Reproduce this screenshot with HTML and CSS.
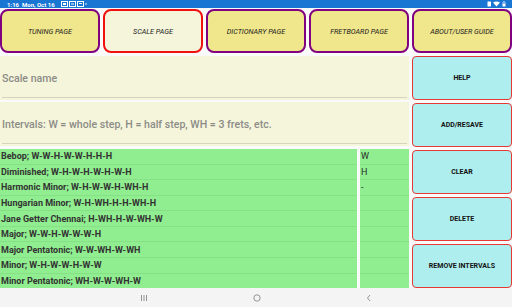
FILE: index.html
```html
<!DOCTYPE html>
<html lang="en">
<head>
    <meta charset="UTF-8">
    <meta name="viewport" content="width=device-width, initial-scale=1.0">
    <title>Scale Page</title>
    <link rel="stylesheet" href="styles.css">
</head>
<body>
    <div class="status-bar">
        <span class="status-time">1:16&nbsp;&nbsp;Mon, Oct 16</span>
        <span class="status-icons">
            <svg width="26" height="6" viewBox="0 0 26 6">
                <rect x="0.5" y="0.5" width="6" height="5" fill="none" stroke="#fff" stroke-width="1"/>
                <rect x="2" y="2" width="3" height="2" fill="#fff"/>
                <rect x="8.5" y="0.5" width="6" height="5" fill="none" stroke="#fff" stroke-width="1"/>
                <rect x="10" y="2.5" width="3" height="1" fill="#fff"/>
                <rect x="16.5" y="0.5" width="6" height="5" fill="none" stroke="#fff" stroke-width="1"/>
                <rect x="18" y="2" width="3" height="1" fill="#fff"/>
                <circle cx="25" cy="3" r="0.8" fill="#fff"/>
            </svg>
        </span>
        <span class="status-right">
            <svg width="20" height="6" viewBox="0 0 20 6">
                <rect x="0.5" y="0.5" width="3.5" height="5" rx="0.5" fill="#fff"/>
                <path d="M6 1.5 Q9.5 -0.5 13 1.5 L9.5 5.5 Z" fill="#fff"/>
                <rect x="15.5" y="2.5" width="3" height="3" fill="#fff"/>
                <path d="M16 2.5 V1.5 A1 1 0 0 1 18 1.5 V2.5" fill="none" stroke="#fff" stroke-width="0.7"/>
            </svg>
        </span>
    </div>

    <div class="tab-row">
        <button class="tab-btn">TUNING PAGE</button>
        <button class="tab-btn tab-current">SCALE PAGE</button>
        <button class="tab-btn">DICTIONARY PAGE</button>
        <button class="tab-btn">FRETBOARD PAGE</button>
        <button class="tab-btn">ABOUT/USER GUIDE</button>
    </div>

    <div class="main-container">
        <div class="left-column">
            <div class="text-field">
                <input placeholder="Scale name">
            </div>
            <div class="text-field">
                <input placeholder="Intervals: W = whole step, H = half step, WH = 3 frets, etc.">
            </div>
            <div class="list-area">
                <ul class="scale-list">
                    <li>Bebop; W-W-H-W-W-H-H-H</li>
                    <li>Diminished; W-H-W-H-W-H-W-H</li>
                    <li>Harmonic Minor; W-H-W-W-H-WH-H</li>
                    <li>Hungarian Minor; W-H-WH-H-H-WH-H</li>
                    <li>Jane Getter Chennai; H-WH-H-W-WH-W</li>
                    <li>Major; W-W-H-W-W-W-H</li>
                    <li>Major Pentatonic; W-W-WH-W-WH</li>
                    <li>Minor; W-H-W-W-H-W-W</li>
                    <li>Minor Pentatonic; WH-W-W-WH-W</li>
                </ul>
                <ul class="interval-list">
                    <li>W</li>
                    <li>H</li>
                    <li>-</li>
                    <li></li>
                    <li></li>
                    <li></li>
                    <li></li>
                    <li></li>
                    <li></li>
                </ul>
            </div>
        </div>
        <div class="right-column">
            <button class="action-btn">HELP</button>
            <button class="action-btn">ADD/RESAVE</button>
            <button class="action-btn">CLEAR</button>
            <button class="action-btn">DELETE</button>
            <button class="action-btn">REMOVE INTERVALS</button>
        </div>
    </div>

    <div class="nav-bar">
        <svg class="nav-icon" width="8" height="8" viewBox="0 0 8 8">
            <path d="M1.5 1 V7 M4 1 V7 M6.5 1 V7" stroke="#8a8a8a" stroke-width="0.9" fill="none"/>
        </svg>
        <svg class="nav-icon" width="8" height="8" viewBox="0 0 8 8">
            <circle cx="4" cy="4" r="3.2" stroke="#8a8a8a" stroke-width="0.9" fill="none"/>
        </svg>
        <svg class="nav-icon" width="8" height="8" viewBox="0 0 8 8">
            <path d="M5 1 L2.5 4 L5 7" stroke="#8a8a8a" stroke-width="0.9" fill="none"/>
        </svg>
    </div>
</body>
</html>
```

FILE: styles.css
```css
* {
    box-sizing: border-box;
}

body {
    margin: 0;
    width: 512px;
    height: 307px;
    overflow: hidden;
    background: #fafafa;
    font-family: Roboto, "Liberation Sans", sans-serif;
}

.status-bar {
    height: 8px;
    background: #1976d2;
    color: #fff;
    display: flex;
    align-items: center;
    padding: 0 5px 0 7px;
    font-size: 6px;
    font-weight: bold;
}

.status-icons {
    margin-left: 6px;
    display: flex;
}

.status-right {
    margin-left: auto;
    display: flex;
}

.tab-row {
    display: grid;
    grid-template-columns: repeat(5, 1fr);
    gap: 3px;
    padding: 1px 0 2px 0;
    height: 47px;
}

.tab-btn {
    background: #f0e68c;
    border: 2px solid #800080;
    border-radius: 8px;
    font-family: Roboto, "Liberation Sans", sans-serif;
    font-style: italic;
    font-size: 7.2px;
    color: #1a1a1a;
    padding: 0;
}

.tab-current {
    background: #f5f5dc;
    border-color: #f01010;
}

.main-container {
    display: flex;
    gap: 3px;
    padding-top: 1px;
    height: 233px;
}

.left-column {
    width: 409px;
    display: flex;
    flex-direction: column;
}

.text-field {
    height: 44px;
    background: #f5f5dc;
    padding: 0 2px;
    display: flex;
    margin-bottom: 2px;
}

.text-field + .text-field {
    margin-bottom: 3px;
}

.text-field input {
    width: 100%;
    height: 42px;
    border: none;
    border-bottom: 1.5px solid #d6d4bc;
    background: transparent;
    font-family: Roboto, "Liberation Sans", sans-serif;
    font-size: 10.6px;
    font-weight: 500;
    padding: 4px 0 0 0;
    outline: none;
}

.text-field input::placeholder {
    color: #8c8c86;
}

.list-area {
    flex: 1;
    display: flex;
    gap: 2px;
}

.scale-list,
.interval-list {
    list-style: none;
    margin: 0;
    padding: 0;
    background: #90ee90;
    display: flex;
    flex-direction: column;
}

.scale-list {
    width: 357px;
}

.interval-list {
    flex: 1;
    margin-left: 1px;
}

.scale-list li,
.interval-list li {
    flex: 1;
    border-bottom: 1px solid #86e086;
    font-size: 9px;
    color: #333;
    padding-left: 1px;
    display: flex;
    align-items: center;
}

.scale-list li {
    font-weight: bold;
}

.interval-list li {
    color: #2a2a2a;
}

.scale-list li:last-child,
.interval-list li:last-child {
    border-bottom: none;
}

.right-column {
    flex: 1;
    display: flex;
    flex-direction: column;
    gap: 3px;
}

.action-btn {
    height: 44px;
    background: #afeeee;
    border: 1px solid #e53935;
    border-radius: 4px;
    font-family: Roboto, "Liberation Sans", sans-serif;
    font-weight: bold;
    font-size: 7px;
    color: #111;
    padding: 0;
}

.nav-bar {
    height: 19px;
    background: #f4f4f4;
    display: flex;
    align-items: center;
    justify-content: space-between;
    padding: 0 139px 0 140px;
}

.nav-icon {
    display: block;
}
```
